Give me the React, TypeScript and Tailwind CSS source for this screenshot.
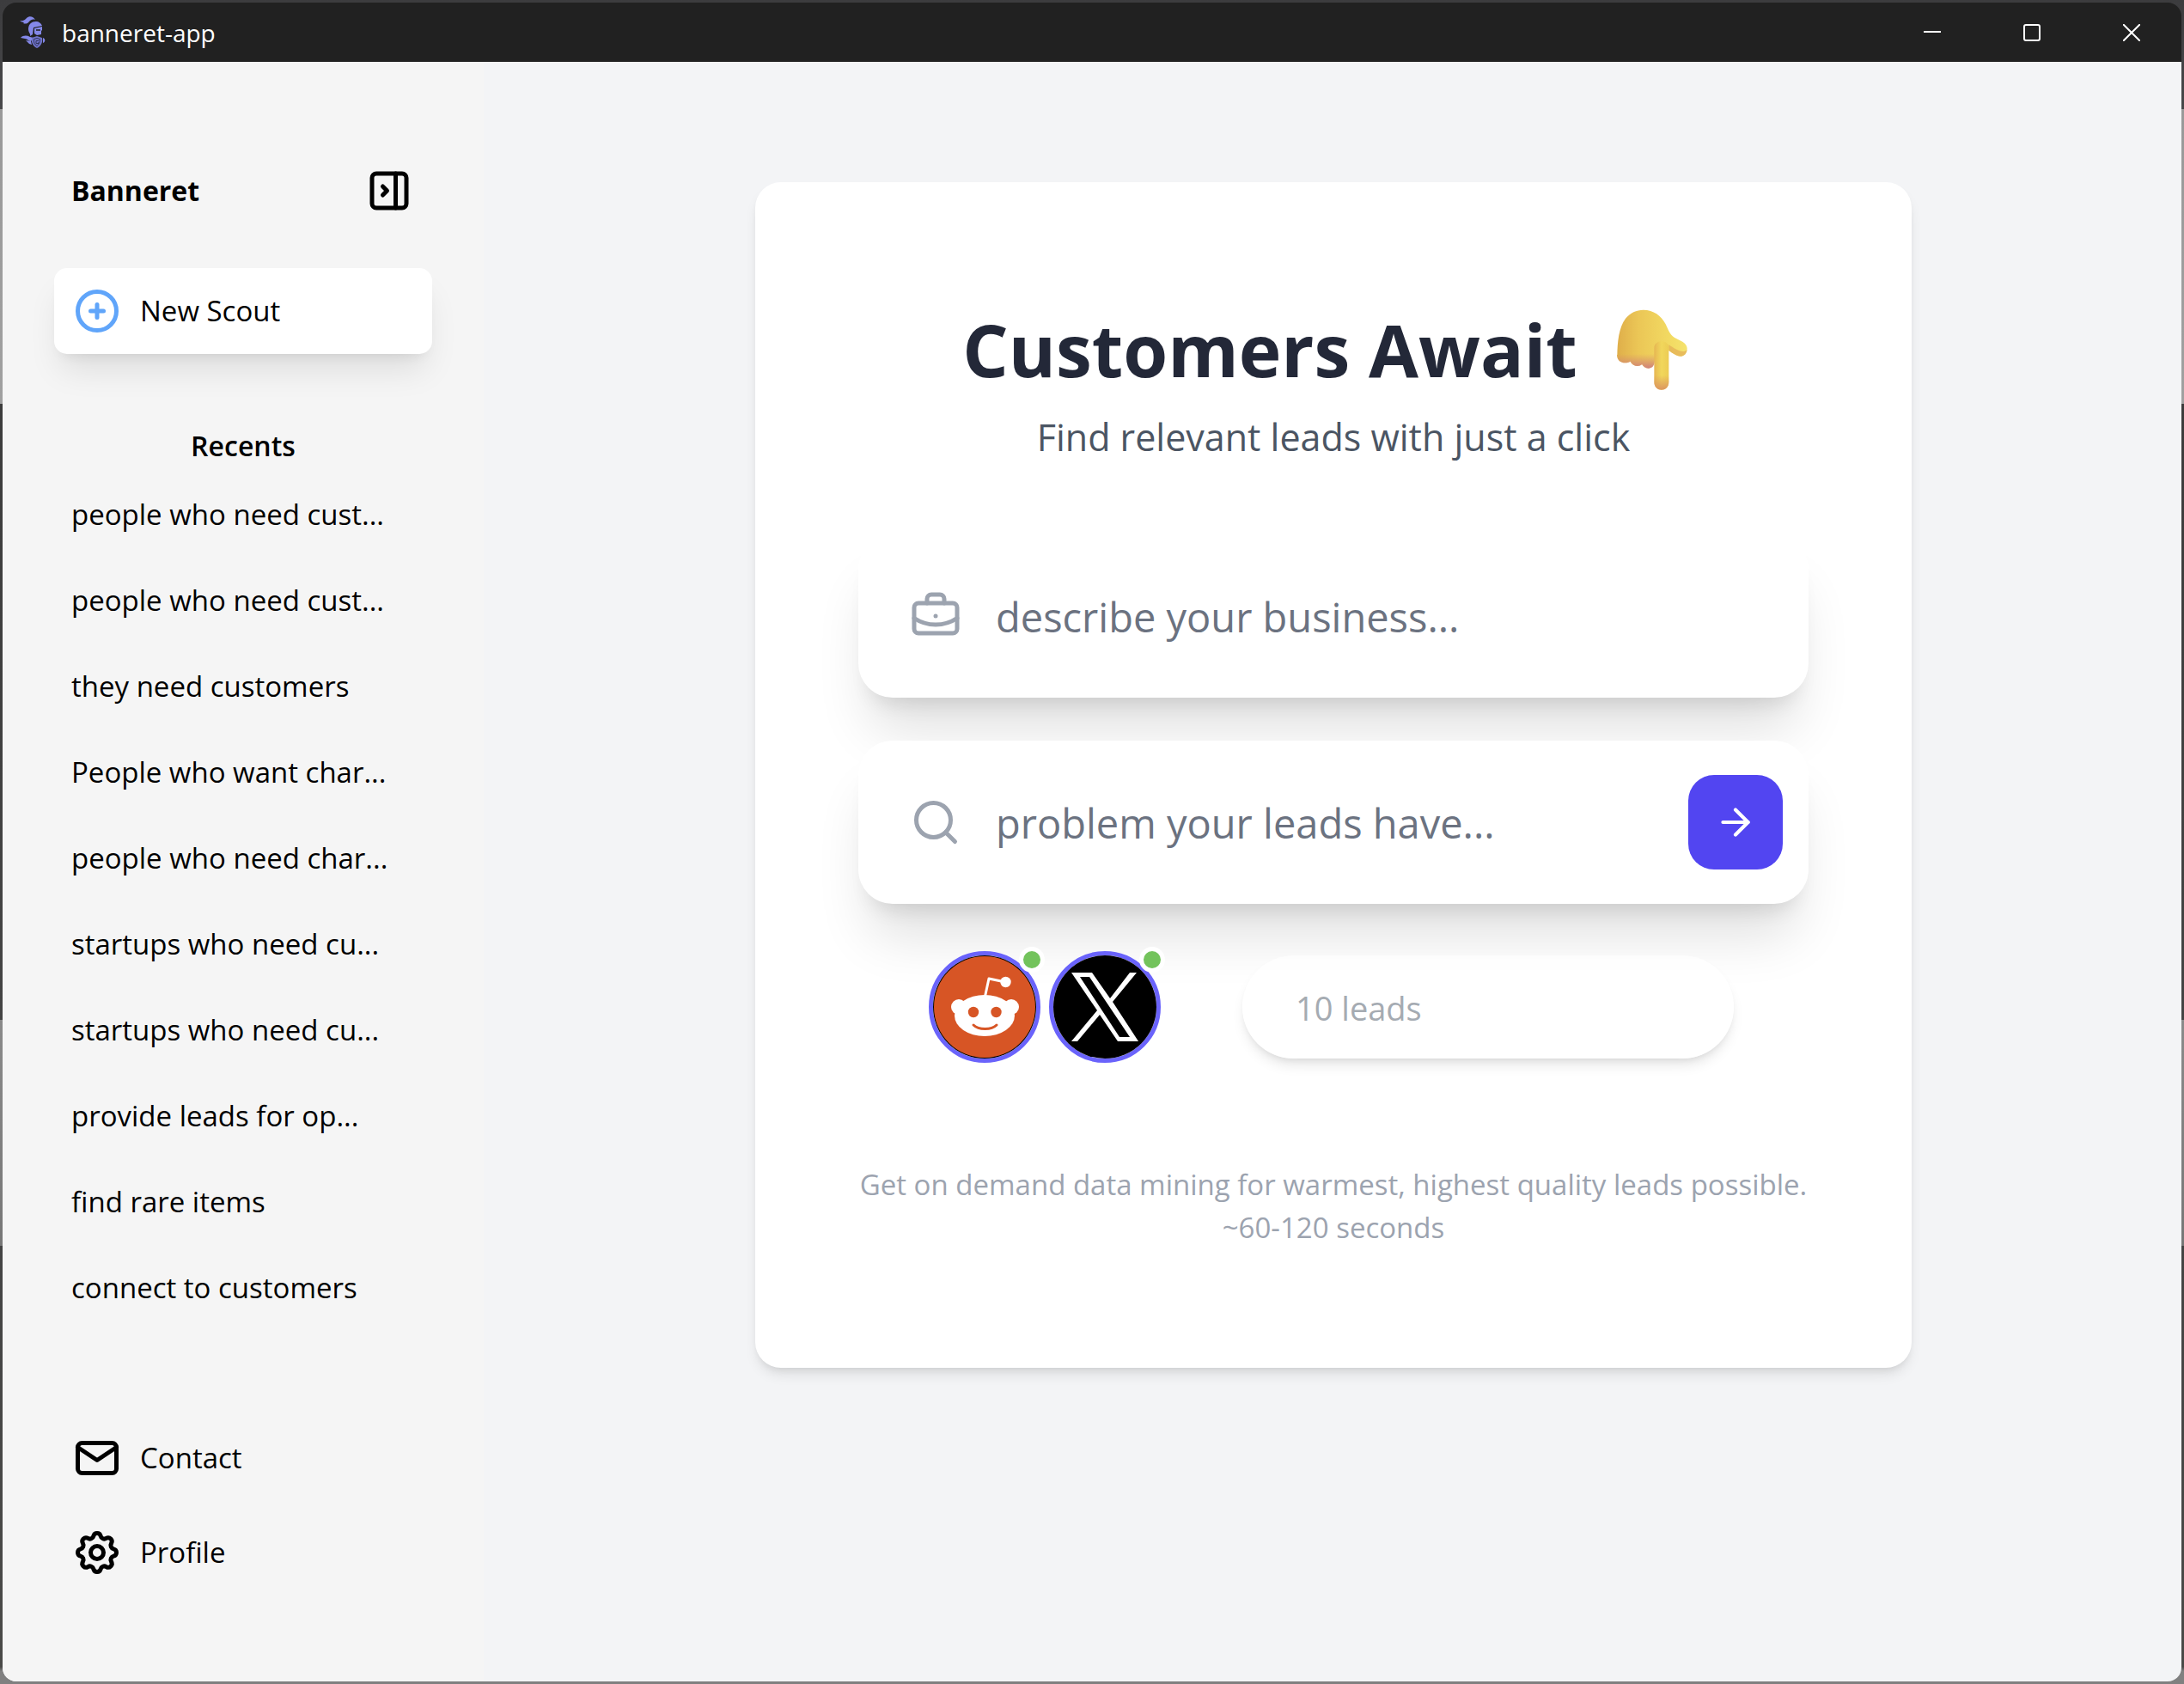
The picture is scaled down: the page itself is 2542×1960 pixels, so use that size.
import { ArrowRight, BriefcaseBusiness, Search } from 'lucide-react'
import { TbCirclePlus, TbLayoutSidebarRightCollapse, TbMail, TbSettings } from 'react-icons/tb'

const recents = [
    'people who need cust...',
    'people who need cust...',
    'they need customers',
    'People who want char...',
    'people who need char...',
    'startups who need cu...',
    'startups who need cu...',
    'provide leads for op...',
    'find rare items',
    'connect to customers',
]

function KnightLogo() {
    return (
        <svg viewBox="22 16 32 40" className="h-10 w-8" fill="#8488e8" aria-hidden="true">
            <path d="M23 22c4 1 6-1 8-3 3-3 8-2 10 2-3-1-5 0-7 2-2 3-5 3-7 2l1-1c-2 0-4-1-5-2z" />
            <path d="M33 32c0-6 4-9 9-9 3 0 6 2 7 5l-10 2-1 8-3 2c1-3-2-4-2-8z" />
            <path d="M40 31l9-2v4l-1 1v4l-5 1-3-2z" />
            <path d="M42 33h5" stroke="#212121" strokeWidth="1.5" />
            <path d="M24 42c3-3 7-3 11-1l4 1-3 4c-3 0-4-3-7-3z" />
            <path d="M30 45l6 1 1 4-3-1z" />
            <path d="M37 42l6-2 6 2c1 6-2 10-6 12-4-2-7-6-6-12z" fill="#6f73c9" />
            <path d="M39.500 43.500l3.500-1 3.500 1c0 4-1 6-3.500 8-3-2-4-4-3.500-8z" fill="none" stroke="#33355c" />
            <path d="M45 45.500h-3v3h3v-1.500" fill="none" stroke="#33355c" />
            <path d="M50 42c3 1 3 5 0 6z" />
        </svg>
    )
}

function PointDown() {
    return (
        <svg viewBox="62 66 246 282" className="h-[94px] w-[82px]" role="img" aria-label="pointing down">
            <defs>
                <linearGradient id="palm" x1="0" y1="0" x2="1" y2="0">
                    <stop offset="0" stopColor="#dfae4a" />
                    <stop offset="0.3" stopColor="#ebc656" />
                    <stop offset="0.75" stopColor="#f2da62" />
                    <stop offset="1" stopColor="#f5e36e" />
                </linearGradient>
                <linearGradient id="tips" x1="0" y1="0" x2="0" y2="1">
                    <stop offset="0.3" stopColor="#d68a6e" stopOpacity="0" />
                    <stop offset="1" stopColor="#d0807c" />
                </linearGradient>
                <linearGradient id="finger" x1="0" y1="0" x2="1" y2="0">
                    <stop offset="0" stopColor="#e6b653" />
                    <stop offset="0.5" stopColor="#f1d75c" />
                    <stop offset="1" stopColor="#edcc54" />
                </linearGradient>
                <linearGradient id="fingertip" x1="0" y1="0" x2="0" y2="1">
                    <stop offset="0.7" stopColor="#dc9660" stopOpacity="0" />
                    <stop offset="1" stopColor="#dc9660" />
                </linearGradient>
            </defs>
            <path
                d="M63 225C64 180 68 130 92 98c16-20 38-30 62-30 36 0 62 20 78 50 10 20 14 36 30 46 18 10 44 18 45 38 0 16-8 28-22 28-16 0-30-12-42-20l-50 40c-2 14-10 22-22 22-10 0-18-6-22-14-10 10-32 8-41-10-16 10-46 6-46-23z"
                fill="url(#palm)"
            />
            <path
                d="M63 200v25c0 29 30 33 46 23 9 18 31 20 41 10 4 8 12 14 22 14 12 0 20-8 22-22v-50z"
                fill="url(#tips)"
            />
            <path d="M243 190v20c12 8 26 20 42 20 12 0 20-10 22-22-16 14-40-2-64-18z" fill="#e2ad56" opacity="0.7" />
            <path d="M192 200c0-30 51-30 51 0v120c0 36-51 36-51 0z" fill="url(#finger)" />
            <path d="M192 200c0-30 51-30 51 0v120c0 36-51 36-51 0z" fill="url(#fingertip)" />
        </svg>
    )
}

function RedditLogo() {
    return (
        <svg viewBox="0 0 120 120" className="size-full" aria-hidden="true">
            <circle cx="60" cy="60" r="60" fill="#000" />
            <circle cx="60" cy="60" r="59" fill="#d75525" />
            <path d="M60 50l5-23 19 4" fill="none" stroke="#fff" strokeWidth="3" strokeLinejoin="round" />
            <circle cx="84.500" cy="31" r="6.200" fill="#fff" />
            <circle cx="30" cy="60" r="9" fill="#fff" />
            <circle cx="91" cy="60" r="9" fill="#fff" />
            <ellipse cx="60" cy="70" rx="35" ry="24" fill="#fff" />
            <circle cx="47" cy="66" r="6.200" fill="#d75525" />
            <circle cx="73.500" cy="66" r="6.200" fill="#d75525" />
            <path d="M47 81c6 6 21 6 27 0" fill="none" stroke="#d75525" strokeWidth="3" strokeLinecap="round" />
        </svg>
    )
}

function XLogo() {
    return (
        <svg viewBox="0 0 120 120" className="size-full" aria-hidden="true">
            <circle cx="60" cy="60" r="60" fill="#000" />
            <path
                fill="#fff"
                fillRule="evenodd"
                d="M21 20h24l21 30 23-30h8L69 54l30 46H75L54 69l-26 31h-7l30-36zM31 25l46 70h12L42 25z"
            />
        </svg>
    )
}

function SourceToggle({ label, children }: { label: string; children: React.ReactNode }) {
    return (
        <button
            type="button"
            aria-label={label}
            className="relative size-[130px] rounded-full border-[5px] border-[#6a63fb]"
        >
            {children}
            <span className="absolute -top-2.5 -right-2.5 size-[30px] rounded-full border-[5px] border-white bg-[#73c35c]" />
        </button>
    )
}

function TitleBar() {
    return (
        <header className="flex h-[69px] shrink-0 items-center bg-[#212121] pl-[19px] text-white">
            <KnightLogo />
            <span className="ml-[18px] text-[28px]">banneret-app</span>
            <div className="ml-auto flex h-full">
                <button type="button" aria-label="Minimize" className="flex w-[116px] items-center justify-center">
                    <svg viewBox="0 0 20 20" className="size-5" stroke="#fff" strokeWidth="2">
                        <path d="M0 9h20" />
                    </svg>
                </button>
                <button type="button" aria-label="Maximize" className="flex w-[116px] items-center justify-center">
                    <svg viewBox="0 0 20 20" className="size-5" fill="none" stroke="#fff" strokeWidth="2">
                        <rect x="1" y="1" width="18" height="18" rx="2" />
                    </svg>
                </button>
                <button type="button" aria-label="Close" className="flex w-[116px] items-center justify-center">
                    <svg viewBox="0 0 20 20" className="size-5" stroke="#fff" strokeWidth="2">
                        <path d="M0 0l20 20M20 0L0 20" />
                    </svg>
                </button>
            </div>
        </header>
    )
}

function Sidebar() {
    return (
        <aside className="flex w-[560px] shrink-0 flex-col bg-[#f5f5f5] px-[60px] pt-[120px] pb-[100px] text-[33px] leading-[50px] text-black">
            <div className="flex items-center justify-between px-5">
                <span className="text-[32px] font-bold">Banneret</span>
                <button type="button" aria-label="Collapse sidebar">
                    <TbLayoutSidebarRightCollapse className="size-[60px]" />
                </button>
            </div>

            <button
                type="button"
                className="mt-[60px] flex h-[100px] items-center gap-5 rounded-[15px] bg-white px-5 shadow-[0_25px_38px_-8px_rgba(0,0,0,0.1),0_10px_15px_-10px_rgba(0,0,0,0.1)]"
            >
                <TbCirclePlus className="size-[60px] text-[#60a5fa]" />
                New Scout
            </button>

            <h2 className="mt-[82px] text-center text-[32px] font-semibold">Recents</h2>
            <ul className="mt-[5px]">
                {recents.map((item, i) => (
                    <li key={i}>
                        <a href="#" className="flex h-[100px] items-center px-5">
                            {item}
                        </a>
                    </li>
                ))}
            </ul>

            <nav className="mt-auto flex flex-col gap-2.5">
                <a href="#" className="flex h-[100px] items-center gap-5 px-5">
                    <TbMail className="size-[60px]" />
                    Contact
                </a>
                <a href="#" className="flex h-[100px] items-center gap-5 px-5">
                    <TbSettings className="size-[60px]" />
                    Profile
                </a>
            </nav>
        </aside>
    )
}

const fieldStyle =
    'flex h-[190px] items-center rounded-[40px] bg-white pl-[60px] pr-[30px] shadow-[0_50px_63px_-13px_rgba(0,0,0,0.12),0_20px_25px_-15px_rgba(0,0,0,0.12)]'

const inputStyle =
    'ml-10 min-w-0 flex-1 bg-transparent pt-0.5 text-[47px] leading-[70px] outline-none placeholder:text-[#6b7280]'

function SearchCard() {
    return (
        <section className="w-[1346px] max-w-full rounded-[30px] bg-white px-[120px] pt-[140px] pb-[138px] text-center shadow-[0_10px_15px_-3px_rgba(0,0,0,0.1),0_5px_10px_-5px_rgba(0,0,0,0.1)]">
            <h1 className="flex h-[110px] items-center justify-center gap-[46px] pr-5 text-[84px] font-bold text-[#232838]">
                Customers Await
                <PointDown />
            </h1>
            <p className="mt-3 text-[43px] leading-[70px] text-[#4b5563]">Find relevant leads with just a click</p>

            <form className="mt-[78px] text-left">
                <label className={fieldStyle}>
                    <BriefcaseBusiness className="size-[60px] shrink-0 text-[#9ca3af]" />
                    <input type="text" placeholder="describe your business..." className={inputStyle} />
                </label>
                <label className={`mt-[50px] ${fieldStyle}`}>
                    <Search className="size-[60px] shrink-0 text-[#9ca3af]" />
                    <input type="text" placeholder="problem your leads have..." className={inputStyle} />
                    <button
                        type="submit"
                        aria-label="Search"
                        className="flex size-[110px] items-center justify-center rounded-[30px] bg-[#5245f1] text-white"
                    >
                        <ArrowRight className="size-[50px]" />
                    </button>
                </label>

                <div className="mt-[55px] flex items-center pr-[87px] pl-[82px]">
                    <div className="flex gap-2.5">
                        <SourceToggle label="Reddit">
                            <RedditLogo />
                        </SourceToggle>
                        <SourceToggle label="X">
                            <XLogo />
                        </SourceToggle>
                    </div>
                    <input
                        type="text"
                        aria-label="Number of leads"
                        placeholder="10 leads"
                        className="ml-[95px] h-[120px] min-w-0 flex-1 rounded-full bg-white/70 px-[62px] pt-0.5 text-[38px] shadow-[0_10px_15px_-3px_rgba(0,0,0,0.1),0_5px_10px_-5px_rgba(0,0,0,0.1)] outline-none placeholder:text-[#a5abb2]"
                    />
                </div>
            </form>

            <p className="mt-[117px] text-[33px] leading-[50px] text-[#9ca3af]">
                Get on demand data mining for warmest, highest quality leads possible.
                <br />
                ~60-120 seconds
            </p>
        </section>
    )
}

export default function App() {
    return (
        <div className="flex min-h-screen bg-[linear-gradient(#3c3c3e_0,#48484a_127px,#999_127px,#a0a0a0_470px,#3c3c3c_470px,#444_1187px,#8a8a8a_1187px,#777_1450px,#444_1450px,#4a4a48_1940px,#808080_1945px)] p-[3px] font-['Open_Sans','Noto_Sans',sans-serif]">
            <div className="flex flex-1 flex-col overflow-hidden rounded-[16px]">
                <TitleBar />
                <div className="flex flex-1 bg-[#f3f4f6]">
                    <Sidebar />
                    <main className="flex min-w-0 flex-1 items-start justify-center pt-[140px] pl-0.5">
                        <SearchCard />
                    </main>
                </div>
            </div>
        </div>
    )
}
